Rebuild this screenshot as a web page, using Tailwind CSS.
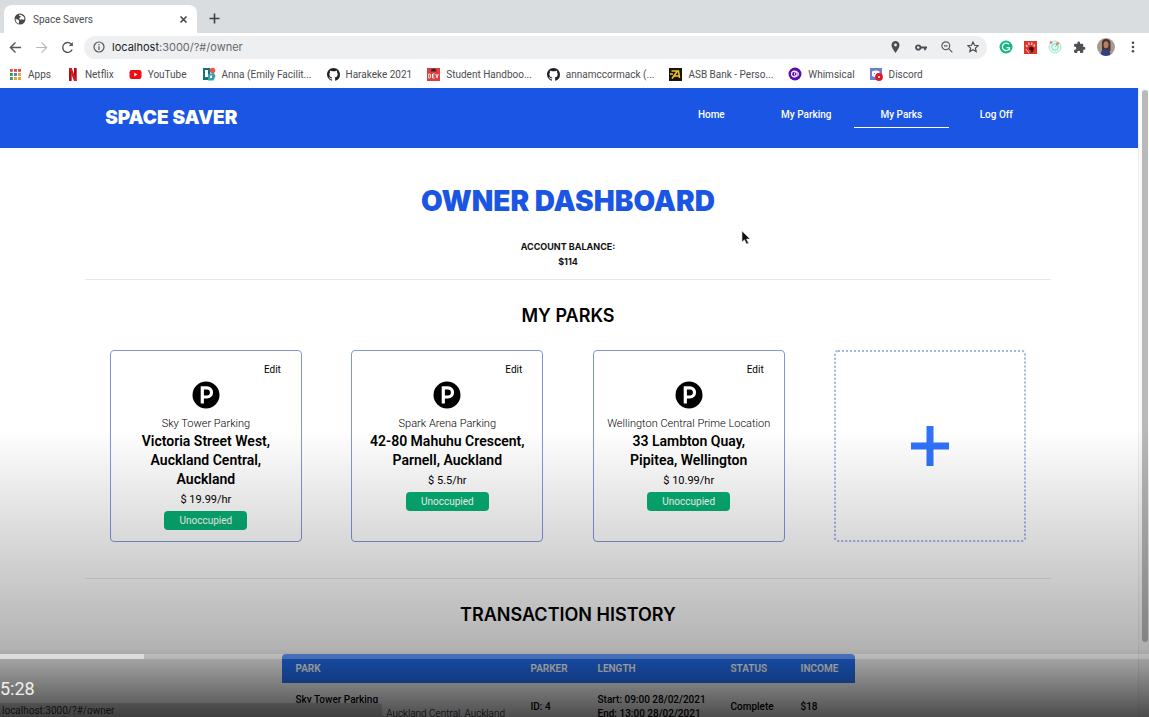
<!DOCTYPE html>
<html lang="en">
<head>
<meta charset="utf-8">
<title>Space Savers</title>
<script src="https://cdn.jsdelivr.net/npm/@tailwindcss/browser@4"></script>
</head>
<body class="relative flex h-screen flex-col overflow-hidden bg-white font-['Roboto',sans-serif] text-black">

<!-- Shared icons -->
<svg class="hidden" aria-hidden="true">
  <symbol id="github" viewBox="0 0 16 16"><path d="M8 0C3.58 0 0 3.58 0 8c0 3.54 2.29 6.53 5.47 7.59.4.07.55-.17.55-.38 0-.19-.01-.82-.01-1.49-2.01.37-2.53-.49-2.69-.94-.09-.23-.48-.94-.82-1.13-.28-.15-.68-.52-.01-.53.63-.01 1.08.58 1.23.82.72 1.21 1.87.87 2.33.66.07-.52.28-.87.51-1.07-1.78-.2-3.64-.89-3.64-3.95 0-.87.31-1.59.82-2.15-.08-.2-.36-1.02.08-2.12 0 0 .67-.21 2.2.82.64-.18 1.32-.27 2-.27s1.36.09 2 .27c1.53-1.04 2.2-.82 2.2-.82.44 1.1.16 1.92.08 2.12.51.56.82 1.27.82 2.15 0 3.07-1.87 3.75-3.65 3.95.29.25.54.73.54 1.48 0 1.07-.01 1.93-.01 2.2 0 .21.15.46.55.38A8.01 8.01 0 0 0 16 8c0-4.42-3.58-8-8-8z"/></symbol>
  <symbol id="parking" viewBox="0 0 28 28"><circle cx="14" cy="14" r="13.5"/><path d="M10.3 22.5V6.8h4.6a4.6 4.6 0 0 1 0 9.2h-4.2" fill="none" stroke="#fff" stroke-width="3.2"/></symbol>
</svg>

<header class="shrink-0 text-[#4a4d51]">
  <!-- Tab strip -->
  <div class="flex h-[33px] items-end gap-3 bg-[#dadde0] pl-1">
    <div class="flex h-7 w-[193px] items-center gap-[7px] rounded-t-lg bg-white pr-[9px] pl-[10px]">
      <svg class="size-3" viewBox="0 0 24 24"><circle cx="12" cy="12" r="11" fill="#45484c"/><path d="M3 12c2 1 5 0 6 2s2 2 1 4-1 3 0 4C6 21 3 17 3 12zM11 3c-2 1-1 3 1 3s2 2 0 3-2 3 0 4 3-1 5 0 3 0 4-1c0-4-3-8-10-9z" fill="#fff"/></svg>
      <span class="flex-1 text-[10px]">Space Savers</span>
      <button aria-label="Close tab"><svg class="size-[9px]" viewBox="0 0 9 9" stroke="#3c4043" stroke-width="1.5"><path d="M1.5 1.5l6 6M7.500 1.500l-6 6"/></svg></button>
    </div>
    <button class="mb-[9px]" aria-label="New tab"><svg class="size-[11px]" viewBox="0 0 11 11" stroke="#3c4043" stroke-width="1.6"><path d="M5.500.5v10M.5 5.500h10"/></svg></button>
  </div>

  <!-- Toolbar -->
  <div class="flex h-7 items-center pr-[13px] pl-[9px]">
    <button aria-label="Back"><svg class="size-[13px]" viewBox="0 0 14 14" fill="none" stroke="#54575b" stroke-width="1.5"><path d="M13 7H2M7 1.500L1.500 7 7 12.500"/></svg></button>
    <button class="ml-[13px]" aria-label="Forward"><svg class="size-[13px]" viewBox="0 0 14 14" fill="none" stroke="#b9bbbd" stroke-width="1.300"><path d="M1 7h11M7 1.500L12.500 7 7 12.500"/></svg></button>
    <button class="ml-[13px]" aria-label="Reload"><svg class="size-[13px]" viewBox="0 0 14 14" fill="none" stroke="#54575b" stroke-width="1.500"><path d="M12 9.200A5.300 5.300 0 1 1 11 3.300L12.300 4.700"/><path d="M12.700 1v4.300H8.400z" fill="#54575b" stroke="none"/></svg></button>
    <div class="ml-2.5 flex h-[23px] flex-1 items-center rounded-full bg-[#eeeff1] pr-2 pl-[9px]">
      <svg class="size-3" viewBox="0 0 12 12" fill="none" stroke="#54575b" stroke-width="1.200"><circle cx="6" cy="6" r="5"/><path d="M6 5.300V9M6 3v1.300"/></svg>
      <div class="ml-[7px] flex-1 font-['Inter',sans-serif] text-[11px]"><span class="text-[#202124]">localhost</span><span class="text-[#66696d]">:3000/?#/owner</span></div>
      <div class="flex items-center gap-[14px]">
        <svg class="h-3 w-[11px]" viewBox="0 0 11 12"><path d="M5.500 0a4 4 0 0 0-4 4.100C1.500 7 5.500 12 5.500 12s4-5 4-7.900A4 4 0 0 0 5.500 0z" fill="#4a4d51"/><circle cx="5.500" cy="4" r="1.400" fill="#eeeff1"/></svg>
        <svg class="h-[9px] w-3" viewBox="0 0 12 9" fill="none" stroke="#4a4d51" stroke-width="1.800"><circle cx="3.200" cy="4.500" r="2.200"/><path d="M5.500 4.500H12M10 4.500v2.800"/></svg>
        <svg class="size-3" viewBox="0 0 12 12" fill="none" stroke="#5b5e62" stroke-width="1.200"><circle cx="4.800" cy="4.800" r="3.900"/><path d="M7.700 7.700l3.700 3.700M3 4.800h3.600"/></svg>
        <svg class="size-3" viewBox="0 0 12 12" fill="none" stroke="#4a4d51" stroke-width="1.200"><path d="M6 1l1.500 3.300 3.600.4-2.700 2.400.8 3.500L6 8.800l-3.200 1.800.8-3.500L.9 4.700l3.600-.4z"/></svg>
      </div>
    </div>
    <div class="ml-3 flex items-center gap-[11px]">
      <svg class="size-[14px]" viewBox="0 0 14 14"><circle cx="7" cy="7" r="6.500" fill="#11b886"/><path d="M9.800 4.300A3.700 3.700 0 1 0 10.600 8M7.500 7.600h3v2.600" fill="none" stroke="#fff" stroke-width="1.300"/></svg>
      <svg class="size-[13px]" viewBox="0 0 13 13"><rect width="13" height="13" fill="#dd352b"/><path d="M2 4l1.500 2M4.500 1.500L5.300 4M8 1.500L7.500 4M11 3.500L9.500 5.500" stroke="#f6c0ba" stroke-width="1.500"/><path d="M5 6.500l2.500-1L10 7l-1 4-2.500.8L7 9l-2-.5z" fill="#45130f"/><path d="M2 8l3 4" stroke="#f6c0ba"/></svg>
      <svg class="size-[14px]" viewBox="0 0 14 14" fill="none"><circle cx="7" cy="7" r="6" fill="#e4faf3" stroke="#a5e8d5"/><circle cx="7" cy="7" r="3.300" stroke="#79dcc0"/><path d="M7 7l3.500-3.500" stroke="#5acfae"/><circle cx="3" cy="2.500" r="1.300" fill="#f0714e"/><circle cx="9.500" cy="3.500" r="1.300" fill="#f0714e"/></svg>
      <svg class="size-[13px]" viewBox="0 0 24 24" fill="#4d5054"><path d="M20.500 11H19V7a2 2 0 0 0-2-2h-4V3.500a2.500 2.500 0 0 0-5 0V5H4a2 2 0 0 0-2 2v3.800h1.500a2.700 2.700 0 0 1 0 5.400H2V20a2 2 0 0 0 2 2h3.800v-1.500a2.700 2.700 0 0 1 5.400 0V22H17a2 2 0 0 0 2-2v-4h1.500a2.500 2.500 0 0 0 0-5z"/></svg>
      <svg class="size-[18px]" viewBox="0 0 18 18"><clipPath id="face"><circle cx="9" cy="9" r="9"/></clipPath><g clip-path="url(#face)"><path fill="#a79c90" d="M0 0h18v18H0z"/><path fill="#4b332c" d="M5 13V5q0-4 4-4t4.500 4v8z"/><ellipse cx="9" cy="6.800" rx="2.500" ry="3.500" fill="#b77f67"/><path fill="#35417d" d="M3 18l2-6 3-1 1 1 3-1 2 7z"/></g></svg>
      <button class="ml-1" aria-label="Menu"><svg class="h-3 w-[6px]" viewBox="0 0 6 12" fill="#4a4d51"><circle cx="3" cy="1.700" r="1.300"/><circle cx="3" cy="6" r="1.300"/><circle cx="3" cy="10.300" r="1.300"/></svg></button>
    </div>
  </div>

  <!-- Bookmarks -->
  <nav class="flex h-[27px] items-center gap-[15px] pb-px pl-[9px] text-[10px] whitespace-nowrap" aria-label="Bookmarks">
    <a href="#" class="flex items-center gap-1.5"><svg class="size-[13px]" viewBox="0 0 13 13"><path fill="#d8503f" d="M1 1h3v3H1zM5 1h3v3H5zM9 1h3v3H9z"/><path fill="#3f9c58" d="M1 5h3v3H1z"/><path fill="#4a7fe0" d="M5 5h3v3H5z"/><path fill="#e3a63c" d="M9 5h3v3H9zM5 9h3v3H5zM9 9h3v3H9z"/><path fill="#3f9c58" d="M1 9h3v3H1z"/><path stroke="#fff" d="M4.300 0v13M8.500 0v13M0 4.300h13M0 8.500h13"/></svg>Apps</a>
    <a href="#" class="flex items-center gap-1.5"><svg class="size-[13px]" viewBox="0 0 13 13"><path fill="#a50f16" d="M3 0h2.700v13H3zM8 0h2.700v13H8z"/><path fill="#df1720" d="M3 0h2.700l5 13H8z"/></svg>Netflix</a>
    <a href="#" class="flex items-center gap-1.5"><svg class="size-[13px]" viewBox="0 0 13 13"><rect x="0.500" y="2" width="12" height="9" rx="2.300" fill="#f40a12"/><path fill="#fff" d="M5.200 4.600v3.800l3.200-1.900z"/></svg>YouTube</a>
    <a href="#" class="flex items-center gap-1.5"><svg class="size-[14px]" viewBox="0 0 14 14"><path fill="#16727f" d="M1 1h7v12H1z"/><path fill="#fff" d="M3 3h3v7H3z"/><path fill="#35a2ad" d="M6 7l6-1 1.500 3-2 4.500H6z"/><path fill="#fff" d="M8 9l2-1v3H8z"/><circle cx="10.500" cy="3.500" r="2.800" fill="#ed5548"/></svg>Anna (Emily Facilit...</a>
    <a href="#" class="flex items-center gap-1.5"><svg class="size-[13px] fill-[#202124]"><use href="#github"/></svg>Harakeke 2021</a>
    <a href="#" class="flex items-center gap-1.5"><svg class="size-[13px]" viewBox="0 0 13 13"><rect width="13" height="13" fill="#dc3f3d"/><path fill="#3a2424" d="M4 3.500Q4 .5 6.500.5T9.500 3.500z"/><path d="M1.700 6v4h.8q1.200 0 1.200-2t-1.200-2zM7.500 6H5.500v4h2M5.500 8h1.700M8.800 6l1.200 4 1.200-4" fill="none" stroke="#fff" stroke-width=".9"/></svg>Student Handboo...</a>
    <a href="#" class="flex items-center gap-1.5"><svg class="size-[13px] fill-[#202124]"><use href="#github"/></svg>annamccormack (...</a>
    <a href="#" class="flex items-center gap-1.5"><svg class="size-[13px]" viewBox="0 0 13 13"><rect width="13" height="13" fill="#17140c"/><path d="M2.500 3h7l1 7M8.500 3L3 10.500M4.500 8h6M1 6h3" fill="none" stroke="#efc22c" stroke-width="1.600"/></svg>ASB Bank - Perso...</a>
    <a href="#" class="flex items-center gap-1.5"><svg class="size-[14px]" viewBox="0 0 14 14" fill="none"><circle cx="7" cy="7" r="6.500" fill="#5a10b0"/><circle cx="6.300" cy="7" r="2.800" stroke="#fff" stroke-width="1.200"/><circle cx="8.500" cy="7" r="2.200" stroke="#e2d0fa"/></svg>Whimsical</a>
    <a href="#" class="flex items-center gap-1.5"><svg class="size-[13px]" viewBox="0 0 13 13"><path fill="#6c7fd0" d="M0 0h12v12H0z"/><path fill="#fff" d="M2 3.500q4-2 7.500 0V8q-4 2-7.500 0z"/><path d="M4 5.500h1M7 5.500h1" stroke="#6c7fd0"/><circle cx="9" cy="9" r="3.900" fill="#e01823"/><circle cx="9" cy="9" r="1" fill="#fff"/></svg>Discord</a>
  </nav>
</header>

<div class="flex min-h-0 flex-1">
  <main class="min-w-0 flex-1 overflow-hidden">
    <div class="h-[60px] bg-[#1b55e3] pr-0.5 text-white">
      <div class="mx-auto flex h-full w-[85%] items-center justify-between pr-[7px] pl-5">
        <a href="#" class="font-['Inter',sans-serif] text-[19px] font-black">SPACE SAVER</a>
        <nav class="mb-[5px] flex text-center text-[10px] leading-[14px] font-medium" aria-label="Main">
          <a href="#" class="w-[95px] border-b border-transparent pt-1 pb-[5px]">Home</a>
          <a href="#" class="w-[95px] border-b border-transparent pt-1 pb-[5px]">My Parking</a>
          <a href="#" class="w-[95px] border-b border-white pt-1 pb-[5px]" aria-current="page">My Parks</a>
          <a href="#" class="w-[95px] border-b border-transparent pt-1 pb-[5px]">Log Off</a>
        </nav>
      </div>
    </div>

    <div class="pr-0.5">
    <div class="mx-auto w-[85%] text-center">
      <h1 class="pt-[37px] font-['Inter',sans-serif] text-[28px] leading-8 font-black text-[#1b55e3]">OWNER DASHBOARD</h1>
      <p class="mt-[22px] font-['Inter',sans-serif] text-[9px] leading-[15px] font-bold text-[#111]">ACCOUNT BALANCE:<br>$114</p>
      <hr class="mt-[10px] border-[#e8e8e8]">
      <h2 class="mt-6 font-['Inter',sans-serif] text-[18px] leading-6 font-semibold">MY PARKS</h2>

      <div class="mt-[22px] grid grid-cols-4 justify-items-center">
        <article class="flex h-48 w-48 flex-col items-center rounded border border-[#8296e0] px-3 pt-3">
          <button class="mr-2 self-end text-[10px] leading-[14px]">Edit</button>
          <svg class="mt-1 size-7"><use href="#parking"/></svg>
          <p class="mt-[7px] text-[11px] leading-4 font-light whitespace-nowrap">Sky Tower Parking</p>
          <h3 class="text-[14px] leading-[19px] font-semibold">Victoria Street West, Auckland Central, Auckland</h3>
          <p class="mt-px text-[11px] leading-5">$ 19.99/hr</p>
          <span class="mt-px w-[83px] rounded bg-[#06b074] text-[10px] leading-[19px] text-white">Unoccupied</span>
        </article>
        <article class="flex h-48 w-48 flex-col items-center rounded border border-[#8296e0] px-3 pt-3">
          <button class="mr-2 self-end text-[10px] leading-[14px]">Edit</button>
          <svg class="mt-1 size-7"><use href="#parking"/></svg>
          <p class="mt-[7px] text-[11px] leading-4 font-light whitespace-nowrap">Spark Arena Parking</p>
          <h3 class="text-[14px] leading-[19px] font-semibold">42-80 Mahuhu Crescent, Parnell, Auckland</h3>
          <p class="mt-px text-[11px] leading-5">$ 5.5/hr</p>
          <span class="mt-px w-[83px] rounded bg-[#06b074] text-[10px] leading-[19px] text-white">Unoccupied</span>
        </article>
        <article class="flex h-48 w-48 flex-col items-center rounded border border-[#8296e0] px-3 pt-3">
          <button class="mr-2 self-end text-[10px] leading-[14px]">Edit</button>
          <svg class="mt-1 size-7"><use href="#parking"/></svg>
          <p class="mt-[7px] text-[11px] leading-4 font-light whitespace-nowrap">Wellington Central Prime Location</p>
          <h3 class="text-[14px] leading-[19px] font-semibold">33 Lambton Quay,<br>Pipitea, Wellington</h3>
          <p class="mt-px text-[11px] leading-5">$ 10.99/hr</p>
          <span class="mt-px w-[83px] rounded bg-[#06b074] text-[10px] leading-[19px] text-white">Unoccupied</span>
        </article>
        <button class="flex h-48 w-48 items-center justify-center rounded border-2 border-dotted border-[#a3b1ec]" aria-label="Add a park">
          <svg class="size-10" viewBox="0 0 40 40" stroke="#2f72fb" stroke-width="7"><path d="M20 0v40M1 20h38"/></svg>
        </button>
      </div>

      <hr class="mt-9 border-[#e8e8e8]">
      <h2 class="mt-6 font-['Inter',sans-serif] text-[18px] leading-6 font-semibold">TRANSACTION HISTORY</h2>

      <div class="mx-auto mt-[27px] w-[573px] overflow-hidden rounded-t">
        <table class="w-full table-fixed text-left text-[10px] leading-[14px]">
          <colgroup><col class="w-[249px]"><col class="w-[67px]"><col class="w-[133px]"><col class="w-[70px]"><col></colgroup>
          <thead class="bg-[#2372fa] text-white">
            <tr class="h-[29px]"><th class="pl-[14px] font-semibold">PARK</th><th class="font-semibold">PARKER</th><th class="font-semibold">LENGTH</th><th class="font-semibold">STATUS</th><th class="font-semibold">INCOME</th></tr>
          </thead>
          <tbody class="bg-white font-medium">
            <tr class="h-12"><td class="pl-[14px]">Sky Tower Parking<br><span class="font-light whitespace-nowrap">Victoria Street West, Auckland Central, Auckland</span></td><td>ID: 4</td><td>Start: 09:00 28/02/2021<br>End: 13:00 28/02/2021</td><td>Complete</td><td>$18</td></tr>
          </tbody>
        </table>
      </div>
    </div>
    </div>
  </main>
  <!-- Page scrollbar -->
  <div class="w-[11px] shrink-0 border-l border-[#ececec] bg-[#fafafa] pt-0.5 pl-[3px]"><div class="h-[88%] w-1.5 rounded-full bg-[#b9b9b9]"></div></div>
</div>

<!-- Link status bubble -->
<div class="absolute bottom-0 left-0 h-[14px] w-[382px] rounded-tr bg-[#d2d2d2] pl-0.5 text-[10px] leading-4 text-[#333]">localhost:3000/?#/owner</div>

<!-- Mouse pointer -->
<svg class="absolute top-[230px] left-[741px] h-[15px] w-[10px]" viewBox="0 0 10 15"><path d="M1 1v11l2.500-2.300L5.500 14l2-.8-2-4.200H9z" fill="#111" stroke="#ddd" stroke-width=".6"/></svg>

<!-- Video player controls -->
<div class="pointer-events-none absolute inset-x-0 bottom-0 flex h-[297px] flex-col justify-end bg-linear-to-b from-transparent from-3% via-black/30 via-77% to-black/70">
  <div class="h-[5px] bg-white/20"><div class="h-full bg-white/50" style="width:12.5%"></div></div>
  <time class="mt-4 h-[42px] text-[18px] leading-7 text-[#eee]">5:28</time>
</div>
</body>
</html>
